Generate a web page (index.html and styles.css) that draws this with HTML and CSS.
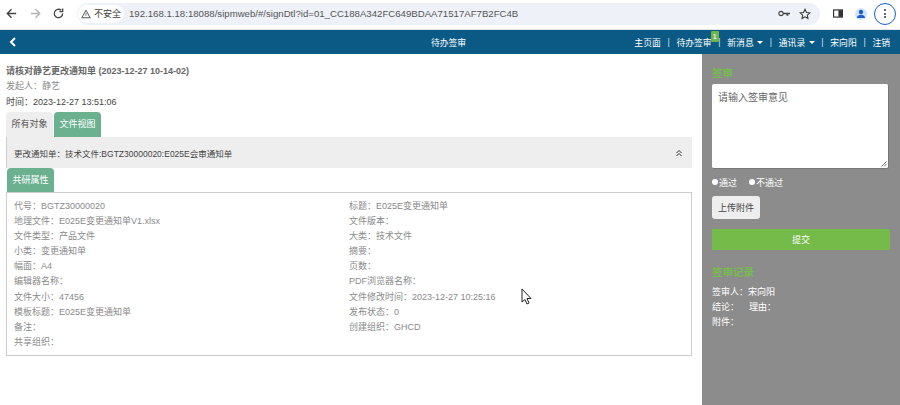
FILE: index.html
```html
<!DOCTYPE html>
<html lang="zh">
<head>
<meta charset="utf-8">
<title>待办签审</title>
<link rel="stylesheet" href="styles.css">
</head>
<body>
<div class="chrome">
  <svg class="cicon" viewBox="0 0 14 14"><path d="M12 7H3M7 2.500 2.500 7 7 11.500" fill="none" stroke="#444" stroke-width="1.500"/></svg>
  <svg class="cicon" viewBox="0 0 14 14"><path d="M2 7h9M7 2.500 11.500 7 7 11.500" fill="none" stroke="#b4b4b4" stroke-width="1.500"/></svg>
  <svg class="cicon" viewBox="0 0 14 14"><path d="M11.500 7A4.500 4.500 0 1 1 10 3.600M11.500 1.500v3.500H8" fill="none" stroke="#444" stroke-width="1.400"/></svg>
  <div class="omni">
    <div class="warn">
      <svg class="warn-ico" viewBox="0 0 12 12"><path d="M6 1.500 11 10.500H1Z" fill="none" stroke="#444" stroke-width="1.100"/><path d="M6 5v3" stroke="#444"/></svg>
      <span>不安全</span>
    </div>
    <span class="url">192.168.1.18:18088/sipmweb/#/signDtl?id=01_CC188A342FC649BDAA71517AF7B2FC4B</span>
    <svg class="key" viewBox="0 0 14 10"><circle cx="3.500" cy="5" r="2.500" fill="none" stroke="#444" stroke-width="1.300"/><path d="M6 4h8v2h-2v1.500h-2V6H6Z" fill="#444"/></svg>
    <svg class="star" viewBox="0 0 14 14"><path d="M7 1.500 8.700 5.200 12.700 5.600 9.700 8.300 10.500 12.300 7 10.300 3.500 12.300 4.300 8.300 1.300 5.600 5.300 5.200Z" fill="none" stroke="#333" stroke-width="1.200"/></svg>
  </div>
  <svg class="side-ico" viewBox="0 0 12 10"><rect x=".7" y=".7" width="10.600" height="8.600" fill="#fff" stroke="#333" stroke-width="1.400"/><rect x="6.500" y="1" width="4.500" height="8" fill="#333"/></svg>
  <div class="avatar"><svg viewBox="0 0 12 12"><circle cx="6" cy="4" r="2.200" fill="#1a5fd0"/><path d="M1.800 10c.4-2.500 2.200-3.200 4.200-3.200s3.800.7 4.200 3.200Z" fill="#1a5fd0"/></svg></div>
  <div class="menu-btn"><i></i><i></i><i></i></div>
</div>

<nav class="topnav">
  <svg class="back" viewBox="0 0 8 10"><path d="M6 1 2 5l4 4" fill="none" stroke="#fff" stroke-width="2"/></svg>
  <div class="nav-title">待办签审</div>
  <ul class="nav-links">
    <li>主页面</li>
    <li class="sep">|</li>
    <li class="has-badge">待办签审<span class="badge">1</span></li>
    <li class="sep">|</li>
    <li>新消息 <span class="caret"></span></li>
    <li class="sep">|</li>
    <li>通讯录 <span class="caret"></span></li>
    <li class="sep">|</li>
    <li>宋向阳</li>
    <li class="sep">|</li>
    <li>注销</li>
  </ul>
</nav>

<div class="page">
  <main class="content">
    <div class="title">请核对静艺更改通知单 (2023-12-27 10-14-02)</div>
    <div class="meta">发起人：静艺</div>
    <div class="meta meta-dark">时间：2023-12-27 13:51:06</div>
    <div class="tabs">
      <div class="tab">所有对象</div>
      <div class="tab tab-on">文件视图</div>
    </div>
    <section class="panel">
      <header class="panel-head">
        <span>更改通知单：技术文件:BGTZ30000020:E025E会审通知单</span>
        <svg class="chev" viewBox="0 0 8 8"><path d="M1.500 4 4 1.500 6.500 4M1.500 7 4 4.500 6.500 7" fill="none" stroke="#333" stroke-width="1"/></svg>
      </header>
      <div class="subtabs"><div class="tab tab-on">共研属性</div></div>
      <div class="fields">
        <ul class="col">
          <li>代号：BGTZ30000020</li>
          <li>地理文件：E025E变更通知单V1.xlsx</li>
          <li>文件类型：产品文件</li>
          <li>小类：变更通知单</li>
          <li>幅面：A4</li>
          <li>编辑器名称：</li>
          <li>文件大小：47456</li>
          <li>模板标题：E025E变更通知单</li>
          <li>备注：</li>
          <li>共享组织：</li>
        </ul>
        <ul class="col">
          <li>标题：E025E变更通知单</li>
          <li>文件版本：</li>
          <li>大类：技术文件</li>
          <li>摘要：</li>
          <li>页数：</li>
          <li>PDF浏览器名称：</li>
          <li>文件修改时间：2023-12-27 10:25:16</li>
          <li>发布状态：0</li>
          <li>创建组织：GHCD</li>
        </ul>
      </div>
    </section>
  </main>

  <aside class="side">
    <h3 class="side-h">签审</h3>
    <div class="textarea">请输入签审意见<svg class="grip" viewBox="0 0 6 6"><path d="M5.500.5.500 5.500M5.500 3 3 5.500" stroke="#555" stroke-width=".8"/></svg></div>
    <div class="radios">
      <label class="radio"><i></i>通过</label>
      <label class="radio"><i></i>不通过</label>
    </div>
    <button class="upload">上传附件</button>
    <button class="submit">提交</button>
    <h3 class="side-h side-h2">签审记录</h3>
    <div class="rec">签审人：宋向阳</div>
    <div class="rec">结论： &nbsp; &nbsp;理由：</div>
    <div class="rec">附件：</div>
  </aside>
</div>

<svg class="cursor" viewBox="0 0 12 18"><path d="M1 1v13l3-2.500 2 4.500 2-1-2-4.500h4Z" fill="#fff" stroke="#222" stroke-width="1"/></svg>
</body>
</html>
```
FILE: styles.css
```css
* { box-sizing: border-box; }
html, body { margin: 0; height: 405px; overflow: hidden; background: #fff; }
body { font-family: "Liberation Sans", "Noto Sans CJK SC", sans-serif; font-size: 9px; color: #666; }

.chrome { height: 30px; display: flex; align-items: center; padding: 0 0 2px 5px; background: #fff; border-bottom: 1px solid #dfe3ea; }
.cicon { width: 13px; height: 13px; flex: none; }
.cicon + .cicon { margin-left: 10.500px; }
.omni { margin-left: 12px; width: 743px; height: 22px; background: #eef1f8; border-radius: 11px; display: flex; align-items: center; flex: none; }
.warn { height: 18px; margin-left: 1px; padding: 0 3px; background: #fff; border-radius: 9px; display: flex; align-items: center; gap: 3px; color: #444; font-size: 9px; flex: none; }
.warn-ico { width: 10px; height: 10px; }
.url { margin-left: 5px; font-size: 9.650px; color: #555; white-space: nowrap; flex: 1; }
.key { width: 12px; height: 9px; margin-right: 9px; flex: none; }
.star { width: 12px; height: 12px; margin-right: 9px; flex: none; }
.side-ico { width: 10px; height: 9px; margin-left: 13px; flex: none; }
.avatar { width: 12px; height: 12px; margin-left: 12px; border-radius: 50%; background: #d5e3fa; display: flex; flex: none; }
.avatar svg { width: 12px; height: 12px; }
.menu-btn { width: 22px; height: 22px; margin-left: 7px; border: 1.500px solid #1a5fd0; border-radius: 50%; display: flex; flex-direction: column; align-items: center; justify-content: center; gap: 1.500px; flex: none; }
.menu-btn i { width: 2px; height: 2px; background: #333; border-radius: 50%; }

.topnav { height: 24px; background: #0a5a85; color: #fff; display: flex; align-items: center; position: relative; padding-left: 9px; }
.back { width: 8px; height: 10px; }
.nav-title { position: absolute; left: 0; right: 0; text-align: center; font-size: 8.800px; padding-right: 3px; }
.nav-links { list-style: none; margin: 0 0 0 auto; padding: 0 10px 0 0; display: flex; gap: 6.700px; position: relative; font-size: 8.800px; align-items: center; }
.sep { color: #cfe0ea; }
.has-badge { position: relative; }
.badge { position: absolute; right: -7px; top: -5px; width: 8px; height: 11px; background: #6fb34e; color: #fff; font-size: 8px; line-height: 11px; text-align: center; border-radius: 1px; }
.caret { display: inline-block; margin-left: 1px; vertical-align: 2px; border: 3px solid transparent; border-top-color: #fff; border-bottom: 0; }

.page { height: 351px; display: flex; }
.content { flex: 1; padding: 11px 10px 0 6px; min-width: 0; }
.title { font-weight: bold; line-height: 13px; color: #666; }
.meta { line-height: 15px; margin-top: 1px; color: #8a8a8a; }
.meta-dark { color: #444; margin-top: 0; padding-top: 1px; height: 16px; }
.tabs, .subtabs { display: flex; gap: 1px; }
.tabs { margin-top: 2px; }
.tab { width: 47px; height: 25px; line-height: 25px; text-align: center; background: #eee; color: #555; border-radius: 4px 4px 0 0; }
.tab-on { background: #6bb08f; color: #fff; }
.panel { border-left: 1px solid #ccc; }
.panel-head { height: 31px; background: #eee; display: flex; align-items: center; justify-content: space-between; padding: 0 9px 0 7px; color: #444; font-size: 8.500px; }
.chev { width: 8px; height: 8px; }
.subtabs { height: 24px; background: #fff; margin-left: -1px; padding-left: 1px; }
.subtabs .tab { height: 24px; line-height: 24px; }
.fields { display: flex; height: 164px; border: 1px solid #ccc; border-left: 0; padding: 6px 7px 0; }
.col { list-style: none; margin: 0; padding: 0; width: 335px; }
.col li { height: 15.100px; line-height: 15px; color: #8a8a8a; white-space: nowrap; }

.side { width: 198px; background: #8c8c8c; padding: 12px 11px 0 10px; color: #fff; flex: none; }
.side-h { margin: 0; font-size: 10.500px; line-height: 14px; color: #76bd4b; font-weight: bold; }
.textarea { position: relative; margin-top: 4px; width: 177px; height: 85px; background: #fff; border: 1px solid #777; border-width: 0 1px 1px 0; border-radius: 2px; padding: 5px 6px; color: #666; font-size: 10px; }
.grip { position: absolute; right: 1px; bottom: 1px; width: 6px; height: 6px; }
.radios { display: flex; gap: 12px; margin-top: 8px; height: 12px; line-height: 12px; }
.radio { display: flex; align-items: center; gap: 1px; }
.radio i { width: 6px; height: 6px; background: #fff; border-radius: 50%; margin-top: -2px; }
.upload { display: block; margin-top: 7px; width: 48px; height: 23px; padding: 0; border: 0; background: #eee; border-radius: 3px; font: inherit; color: #444; }
.submit { display: block; margin-top: 10px; width: 178px; height: 21px; padding: 0; border: 0; background: #74bb4a; color: #fff; font: inherit; }
.side-h2 { margin-top: 15px; }
.rec { line-height: 15px; }
.side-h2 + .rec { margin-top: 6px; }

.cursor { position: absolute; left: 521px; top: 288px; width: 12px; height: 18px; }
```
